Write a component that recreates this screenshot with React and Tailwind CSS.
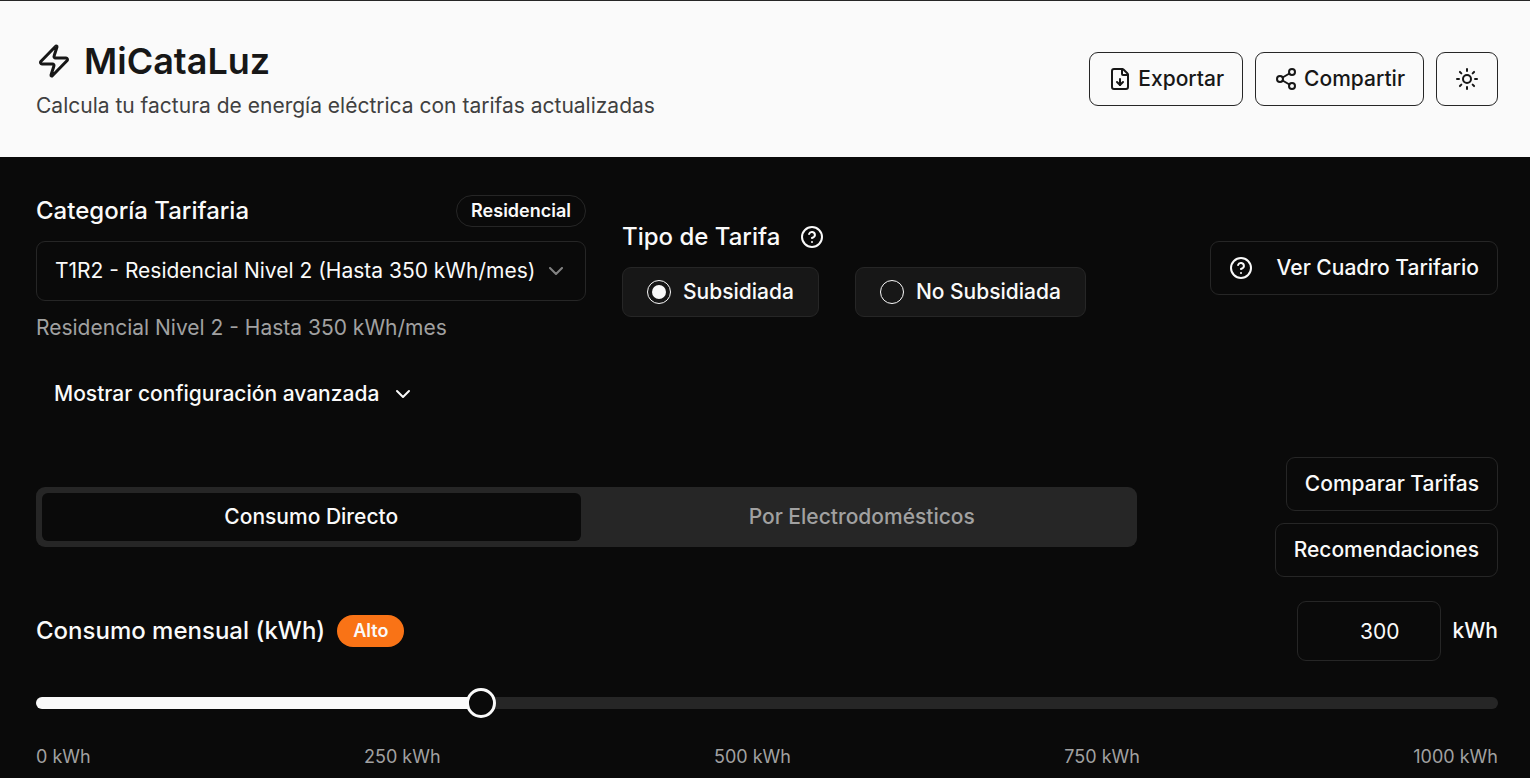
import { useState } from "react";
import {
  ChevronDown,
  CircleHelp,
  FileDown,
  Share2,
  Sun,
  Zap,
} from "lucide-react";

const MAX_KWH = 1000;
const marks = [0, 250, 500, 750, 1000];

const categories = [
  { id: "T1R1", name: "Residencial Nivel 1", limit: "Hasta 150 kWh/mes" },
  { id: "T1R2", name: "Residencial Nivel 2", limit: "Hasta 350 kWh/mes" },
];

const tariffTypes = [
  { id: "subsidiada", label: "Subsidiada" },
  { id: "no-subsidiada", label: "No Subsidiada" },
];

const tabs = [
  { id: "directo", label: "Consumo Directo" },
  { id: "electro", label: "Por Electrodomésticos" },
];

function OutlineButton({ children, dark, ...props }) {
  return (
    <button
      type="button"
      className={
        dark
          ? "flex h-[54px] items-center rounded-[9px] border border-neutral-800 bg-neutral-950 px-[18px] font-medium whitespace-nowrap text-neutral-50"
          : "flex h-[54px] items-center gap-1.5 rounded-[9px] border border-neutral-800 bg-neutral-50 px-[18px] font-medium whitespace-nowrap text-neutral-900"
      }
      {...props}
    >
      {children}
    </button>
  );
}

function Header() {
  return (
    <header className="flex items-center justify-between border-t border-neutral-800 bg-neutral-50 py-9 pr-8 pl-9 text-neutral-900">
      <div>
        <h1 className="flex items-center gap-3 text-4xl leading-[48px] font-semibold">
          <Zap size={36} />
          MiCataLuz
        </h1>
        <p className="mt-1.5 leading-[30px] text-neutral-700">
          Calcula tu factura de energía eléctrica con tarifas actualizadas
        </p>
      </div>
      <div className="flex gap-3">
        <OutlineButton>
          <FileDown size={24} />
          Exportar
        </OutlineButton>
        <OutlineButton>
          <Share2 size={24} />
          Compartir
        </OutlineButton>
        <OutlineButton aria-label="Cambiar tema">
          <Sun size={24} />
        </OutlineButton>
      </div>
    </header>
  );
}

export default function App() {
  const [category, setCategory] = useState("T1R2");
  const [tariff, setTariff] = useState("subsidiada");
  const [tab, setTab] = useState("directo");
  const [kwh, setKwh] = useState(300);

  const selected = categories.find((c) => c.id === category);
  const percent = (kwh / MAX_KWH) * 100;

  return (
    <div className="min-h-screen bg-neutral-950 font-[Inter,sans-serif] text-[21px] leading-[30px] text-neutral-50">
      <Header />

      <main className="pt-9 pr-8 pb-2 pl-9">
        <div className="grid grid-cols-[minmax(0,550px)_1fr_auto] items-center gap-9">
          <div className="flex flex-col gap-3">
            <div className="flex h-9 items-center justify-between">
              <label htmlFor="category" className="text-2xl font-medium">
                Categoría Tarifaria
              </label>
              <span className="flex h-8 items-center rounded-full border border-neutral-800 px-3.5 text-lg font-semibold">
                Residencial
              </span>
            </div>
            <div className="relative">
              <select
                id="category"
                value={category}
                onChange={(e) => setCategory(e.target.value)}
                className="h-[60px] w-full appearance-none rounded-[9px] border border-neutral-800 bg-neutral-950 pr-12 pl-[18px]"
              >
                {categories.map((c) => (
                  <option key={c.id} value={c.id}>
                    {c.id} - {c.name} ({c.limit})
                  </option>
                ))}
              </select>
              <ChevronDown
                size={24}
                className="pointer-events-none absolute top-[18px] right-[18px] opacity-50"
              />
            </div>
            <p className="text-neutral-400">
              {selected.name} - {selected.limit}
            </p>
          </div>

          <fieldset>
            <div className="flex h-9 items-center gap-5">
              <span id="tariff-type" className="text-2xl font-medium">
                Tipo de Tarifa
              </span>
              <button type="button" aria-label="Ayuda">
                <CircleHelp size={24} />
              </button>
            </div>
            <div
              role="radiogroup"
              aria-labelledby="tariff-type"
              className="mt-3 flex gap-9"
            >
              {tariffTypes.map((t) => (
                <label
                  key={t.id}
                  className="flex h-[50px] items-center gap-3 rounded-[9px] border border-neutral-800 bg-neutral-900 px-6 font-medium whitespace-nowrap"
                >
                  <input
                    type="radio"
                    name="tariff"
                    value={t.id}
                    checked={tariff === t.id}
                    onChange={() => setTariff(t.id)}
                    className="grid size-6 appearance-none place-items-center rounded-full border border-neutral-50 before:size-3.5 before:rounded-full checked:before:bg-neutral-50"
                  />
                  {t.label}
                </label>
              ))}
            </div>
          </fieldset>

          <OutlineButton dark>
            <CircleHelp size={24} className="mr-6" />
            Ver Cuadro Tarifario
          </OutlineButton>
        </div>

        <button
          type="button"
          className="mt-6 flex h-[54px] items-center gap-3 px-[18px] font-medium"
        >
          Mostrar configuración avanzada
          <ChevronDown size={24} />
        </button>

        <div className="mt-9 flex items-center gap-9">
          <div
            role="tablist"
            className="grid h-[60px] flex-1 grid-cols-2 gap-3 rounded-[9px] bg-neutral-800 p-1.5"
          >
            {tabs.map((t) => (
              <button
                key={t.id}
                type="button"
                role="tab"
                aria-selected={tab === t.id}
                onClick={() => setTab(t.id)}
                className={
                  tab === t.id
                    ? "rounded-md bg-neutral-950 font-medium text-neutral-50"
                    : "rounded-md font-medium text-neutral-400"
                }
              >
                {t.label}
              </button>
            ))}
          </div>
          <div className="flex w-[325px] flex-col items-end gap-3">
            <OutlineButton dark>Comparar Tarifas</OutlineButton>
            <OutlineButton dark>Recomendaciones</OutlineButton>
          </div>
        </div>

        <div className="mt-6 flex items-center justify-between">
          <div className="flex items-center gap-3">
            <label htmlFor="kwh" className="text-2xl font-medium">
              Consumo mensual (kWh)
            </label>
            <span className="flex h-8 items-center rounded-full bg-[#f97316] px-4 text-lg font-semibold">
              Alto
            </span>
          </div>
          <div className="flex items-center gap-3">
            <input
              id="kwh"
              type="number"
              min={0}
              max={MAX_KWH}
              value={kwh}
              onChange={(e) => setKwh(Number(e.target.value))}
              className="h-[60px] w-36 rounded-[9px] border border-neutral-800 bg-neutral-950 pr-10 pl-[18px] text-right [&::-webkit-inner-spin-button]:appearance-none"
            />
            <span className="font-medium">kWh</span>
          </div>
        </div>

        <div className="mt-6 flex h-9 items-center">
          <input
            type="range"
            aria-label="Consumo mensual"
            min={0}
            max={MAX_KWH}
            value={kwh}
            onChange={(e) => setKwh(Number(e.target.value))}
            className="h-3 w-full appearance-none rounded-full bg-neutral-800 [&::-webkit-slider-thumb]:size-[30px] [&::-webkit-slider-thumb]:appearance-none [&::-webkit-slider-thumb]:rounded-full [&::-webkit-slider-thumb]:border-3 [&::-webkit-slider-thumb]:border-neutral-50 [&::-webkit-slider-thumb]:bg-neutral-950"
            style={{
              backgroundImage: `linear-gradient(to right, #fafafa ${percent}%, transparent ${percent}%)`,
            }}
          />
        </div>
        <div className="mt-6 flex justify-between text-lg leading-6 text-neutral-400">
          {marks.map((m) => (
            <span key={m}>{m} kWh</span>
          ))}
        </div>
      </main>
    </div>
  );
}
